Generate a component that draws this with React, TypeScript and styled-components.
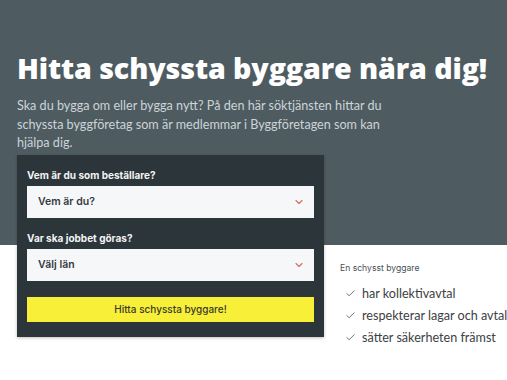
import React from "react";
import styled, { createGlobalStyle } from "styled-components";
import { Check, ChevronDown } from "lucide-react";

const heroColor = "#4e5c62";

const GlobalStyle = createGlobalStyle`
  html, body {
    margin: 0;
    padding: 0;
    background: #ffffff;
  }
  body {
    font-family: "Open Sans", "Liberation Sans", sans-serif;
  }
`;

const StyledPage = styled.div`
  width: 507px;
  height: 380px;
  overflow: hidden;
  box-sizing: border-box;
  padding: 48px 17px 0;
  background: linear-gradient(${heroColor} 245px, #ffffff 245px);
`;

const StyledTitle = styled.h1`
  margin: 0;
  font-family: "Open Sans", sans-serif;
  font-weight: 800;
  font-size: 28.6px;
  line-height: 40px;
  letter-spacing: -0.1px;
  color: #ffffff;
  white-space: nowrap;
`;

const StyledLead = styled.p`
  margin: 9px 0 0;
  width: 380px;
  font-family: "Lato", sans-serif;
  font-size: 12.6px;
  line-height: 18.5px;
  color: #cdd3d6;
`;

const StyledRow = styled.div`
  display: flex;
  align-items: flex-start;
  gap: 16px;
  margin-top: 2px;
`;

const StyledCard = styled.form`
  flex: 0 0 307px;
  box-sizing: border-box;
  padding: 14px 10px 15px;
  background: #2c3539;
  box-shadow: 0 1px 3px rgba(0, 0, 0, 0.25);
`;

const StyledLabel = styled.label<{ $spaced?: boolean }>`
  display: block;
  margin: ${({ $spaced }) => ($spaced ? "14px" : "0")} 0 4px;
  font-family: "Inter", sans-serif;
  font-weight: 700;
  font-size: 10px;
  line-height: 13px;
  color: #f2f4f5;
`;

const StyledSelect = styled.div`
  display: flex;
  align-items: center;
  justify-content: space-between;
  height: 32px;
  box-sizing: border-box;
  padding: 0 9px 0 11px;
  background: #f6f7f9;
  font-family: "Inter", sans-serif;
  font-weight: 600;
  font-size: 10.5px;
  color: #353b3e;
`;

const StyledButton = styled.button`
  display: block;
  width: 100%;
  height: 25px;
  margin-top: 16px;
  border: 0;
  background: #f7ef38;
  font-family: "Inter", sans-serif;
  font-weight: 500;
  font-size: 10px;
  color: #3a3a2a;
  cursor: pointer;
`;

const StyledAside = styled.div`
  flex: 0 0 auto;
  padding-top: 107px;
`;

const StyledAsideTitle = styled.div`
  font-family: "Inter", sans-serif;
  font-size: 8.6px;
  line-height: 12px;
  color: #4a4f52;
`;

const StyledList = styled.ul`
  list-style: none;
  margin: 9px 0 0;
  padding: 0 0 0 5px;
`;

const StyledItem = styled.li`
  display: flex;
  align-items: center;
  gap: 6px;
  height: 22px;
  white-space: nowrap;
  font-family: "Lato", sans-serif;
  font-size: 12.6px;
  color: #3c4144;
`;

const options = ["har kollektivavtal", "respekterar lagar och avtal", "sätter säkerheten främst"];

export default function App() {
  return (
    <>
      <GlobalStyle />
      <StyledPage>
        <StyledTitle>Hitta schyssta byggare nära dig!</StyledTitle>
        <StyledLead>
          Ska du bygga om eller bygga nytt? På den här söktjänsten hittar du schyssta
          byggföretag som är medlemmar i Byggföretagen som kan hjälpa dig.
        </StyledLead>
        <StyledRow>
          <StyledCard onSubmit={(e) => e.preventDefault()}>
            <StyledLabel>Vem är du som beställare?</StyledLabel>
            <StyledSelect>
              Vem är du?
              <ChevronDown size={12} color="#d6705c" strokeWidth={2.3} />
            </StyledSelect>
            <StyledLabel $spaced>Var ska jobbet göras?</StyledLabel>
            <StyledSelect>
              Välj län
              <ChevronDown size={12} color="#d6705c" strokeWidth={2.3} />
            </StyledSelect>
            <StyledButton type="submit">Hitta schyssta byggare!</StyledButton>
          </StyledCard>
          <StyledAside>
            <StyledAsideTitle>En schysst byggare</StyledAsideTitle>
            <StyledList>
              {options.map((o) => (
                <StyledItem key={o}>
                  <Check size={11} strokeWidth={1.6} color="#3c4144" />
                  {o}
                </StyledItem>
              ))}
            </StyledList>
          </StyledAside>
        </StyledRow>
      </StyledPage>
    </>
  );
}
